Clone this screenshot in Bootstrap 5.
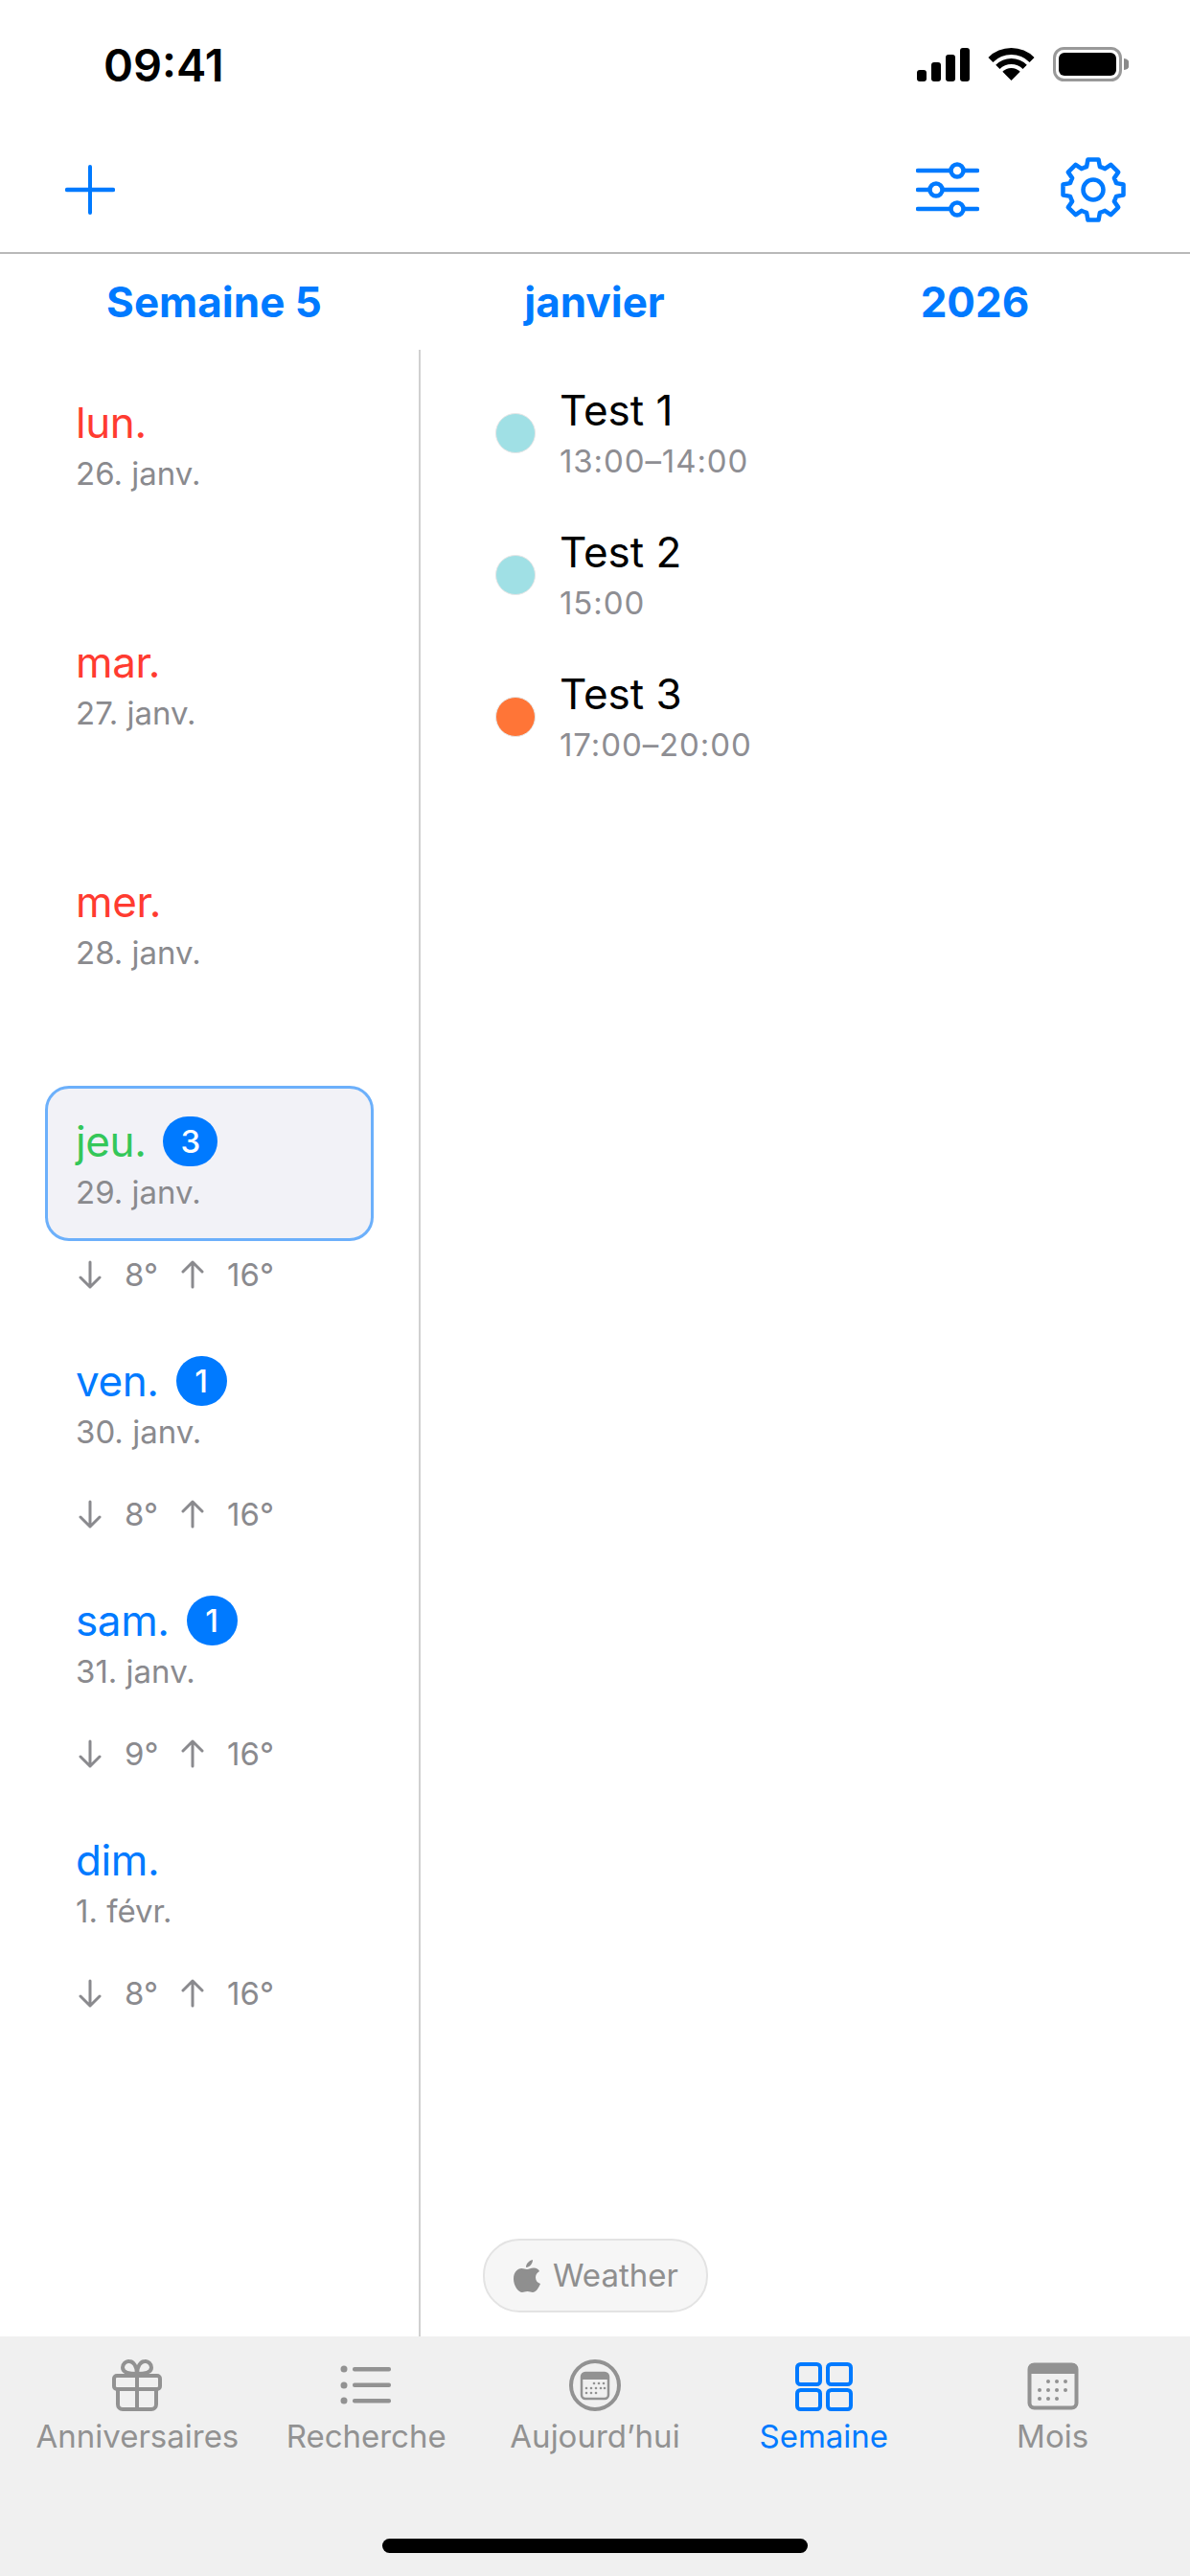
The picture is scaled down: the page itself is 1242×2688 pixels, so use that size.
<!DOCTYPE html>
<html lang="fr">
<head>
    <meta charset="UTF-8">
    <meta name="viewport" content="width=device-width, initial-scale=1.0">
    <title>Semaine</title>
    <link href="https://cdn.jsdelivr.net/npm/bootstrap@5.3.0/dist/css/bootstrap.min.css" rel="stylesheet">
    <style>
        html, body { margin: 0; width: 1242px; height: 2688px; overflow: hidden; }
        body { font-family: Inter, "Liberation Sans", sans-serif; background-color: #fff; color: #000; }
        .app-screen { width: 1242px; height: 2688px; }
        .status-line { height: 132px; padding: 0 64px 0 108px; }
        .clock { font-size: 47px; font-weight: 600; line-height: 1; margin-top: 2px; }
        .top-tools { height: 133px; padding: 0 66px 0 68px; border-bottom: 2px solid #b9b9b9; }
        .tool-right { gap: 84px; }
        .period-row { height: 100px; padding-left: 25px; color: #007aff; font-size: 44px; font-weight: 700; line-height: 1; }
        .period-cell { width: 397px; text-align: center; }
        .split-area { min-height: 0; }
        .days-col { width: 439px; border-right: 2px solid #d0d0d0; padding-top: 18px; flex: none; }
        .day-block { height: 250px; padding: 0 47px; }
        .day-box { height: 162px; padding: 29px 26px 0 29px; border: 3px solid transparent; border-radius: 25px; }
        .day-box.picked { background-color: #f2f2f7; border-color: #6cb0fb; }
        .day-name { font-size: 44px; line-height: 52px; height: 52px; gap: 18px; letter-spacing: -.4px; }
        .day-date { font-size: 33px; line-height: 40px; margin-top: 7px; color: #8a8a8e; }
        .c-red { color: #ff3b30; }
        .c-green { color: #34c759; }
        .c-blue { color: #007aff; }
        .count-pill { min-width: 53px; height: 52px; padding: 0 18px; border-radius: 26px; background-color: #007aff; color: #fff; font-size: 33px; font-weight: 500; line-height: 52px; text-align: center; letter-spacing: 0; }
        .temps-line { height: 40px; margin-top: 15px; padding-left: 35px; color: #8a8a8e; font-size: 33px; line-height: 40px; }
        .temp-val { width: 59px; margin-left: 24px; }
        .events-col { min-width: 0; padding: 13px 0 0 65px; }
        .event-line { height: 148px; gap: 25px; padding-left: 13px; }
        .event-dot { width: 42px; height: 42px; border-radius: 50%; flex: none; border: 1px solid #e6e6e6; }
        .dot-aqua { background-color: #a0e0e5; }
        .dot-orange { background-color: #ff7537; }
        .event-name { font-size: 44px; line-height: 50px; }
        .event-time { font-size: 33px; line-height: 40px; color: #8e8e93; margin-top: 8px; letter-spacing: .9px; }
        .weather-chip { width: 235px; height: 77px; margin-bottom: 25px; gap: 13px; padding-left: 30px; border: 2px solid #e3e3e3; border-radius: 38px; background-color: #f6f6f6; color: #8f8f8f; font-size: 33px; }
        .tab-strip { height: 250px; flex: none; padding: 24px 24px 0; background-color: #f0f0f0; }
        .tab-cell { width: 239px; color: #929292; font-size: 33px; line-height: 40px; }
        .tab-cell.on { color: #007aff; }
        .tab-icon { height: 54px; margin-bottom: 6px; }
        .home-pill { width: 444px; height: 15px; border-radius: 8px; background-color: #000; position: absolute; left: 399px; top: 2649px; }
    </style>
</head>
<body>
    <div class="app-screen d-flex flex-column position-relative">
        <!-- status bar -->
        <div class="status-line d-flex justify-content-between align-items-center flex-none">
            <span class="clock">09:41</span>
            <svg width="222" height="40" viewBox="0 0 222 40">
                <g fill="#000">
                    <rect x="1" y="27" width="10" height="12" rx="3"/>
                    <rect x="16" y="19" width="10" height="20" rx="3"/>
                    <rect x="31" y="11" width="10" height="28" rx="3"/>
                    <rect x="46" y="4" width="10" height="35" rx="3"/>
                    <path d="M99.5 38L90.3 28.8A13 13 0 0 1 108.7 28.8Z"/>
                    <path d="M83.24 21.74A23 23 0 0 1 115.76 21.74L111.52 25.98A17 17 0 0 0 87.48 25.98Z"/>
                    <path d="M75.46 13.96A34 34 0 0 1 123.54 13.96L118.59 18.91A27 27 0 0 0 80.41 18.91Z"/>
                    <rect x="149" y="9" width="60" height="24" rx="6"/>
                    <path d="M217 15A6 6 0 0 1 217 27Z" fill="#8a8a8a"/>
                </g>
                <rect x="144.500" y="4.500" width="69" height="33" rx="10" fill="none" stroke="#999" stroke-width="3"/>
            </svg>
        </div>

        <!-- toolbar -->
        <div class="top-tools d-flex justify-content-between align-items-center">
            <svg width="52" height="52" viewBox="0 0 52 52" stroke="#007aff" stroke-linecap="round" fill="none">
                <path d="M26 2V50" stroke-width="4"/>
                <path d="M2 26H50" stroke-width="4.500"/>
            </svg>
            <div class="tool-right d-flex align-items-center">
                <svg width="66" height="60" viewBox="0 0 66 60" fill="none" stroke="#007aff" stroke-width="4.500" stroke-linecap="round">
                    <path d="M2 10H36M50 10H64M2 30H14M28 30H64M2 50H36M50 50H64"/>
                    <circle cx="43" cy="10" r="6.500"/>
                    <circle cx="21" cy="30" r="6.500"/>
                    <circle cx="43" cy="50" r="6.500"/>
                </svg>
                <svg width="70" height="70" viewBox="0 0 70 70" fill="none" stroke="#007aff" stroke-width="4.500" stroke-linejoin="round">
                    <path d="M28.11 10.97L29.44 3.490H40.56L41.89 10.97A25 25 0 0 1 47.12 13.13L53.36 8.790L61.21 16.64L56.87 22.88A25 25 0 0 1 59.03 28.11L66.51 29.44V40.56L59.03 41.89A25 25 0 0 1 56.87 47.12L61.21 53.36L53.36 61.21L47.12 56.87A25 25 0 0 1 41.89 59.03L40.56 66.51H29.44L28.11 59.03A25 25 0 0 1 22.88 56.87L16.64 61.21L8.790 53.36L13.13 47.12A25 25 0 0 1 10.97 41.89L3.490 40.56V29.44L10.97 28.11A25 25 0 0 1 13.13 22.88L8.790 16.64L16.64 8.790L22.88 13.13A25 25 0 0 1 28.11 10.97Z"/>
                    <circle cx="35" cy="35" r="10.500"/>
                </svg>
            </div>
        </div>

        <!-- week, month, year -->
        <div class="period-row d-flex align-items-center">
            <div class="period-cell">Semaine 5</div>
            <div class="period-cell">janvier</div>
            <div class="period-cell">2026</div>
        </div>

        <div class="split-area d-flex flex-grow-1">
            <div class="days-col">
                <div class="day-block">
                    <div class="day-box">
                        <div class="day-name c-red d-flex align-items-center">lun.</div>
                        <div class="day-date">26. janv.</div>
                    </div>
                </div>
                <div class="day-block">
                    <div class="day-box">
                        <div class="day-name c-red d-flex align-items-center">mar.</div>
                        <div class="day-date">27. janv.</div>
                    </div>
                </div>
                <div class="day-block">
                    <div class="day-box">
                        <div class="day-name c-red d-flex align-items-center">mer.</div>
                        <div class="day-date">28. janv.</div>
                    </div>
                </div>
                <div class="day-block">
                    <div class="day-box picked">
                        <div class="day-name c-green d-flex align-items-center">jeu. <span class="count-pill">3</span></div>
                        <div class="day-date">29. janv.</div>
                    </div>
                    <div class="temps-line d-flex align-items-center">
                        <svg width="24" height="30" viewBox="0 0 24 30" fill="none" stroke="#8a8a8e" stroke-width="3" stroke-linecap="round" stroke-linejoin="round"><path d="M12 2V28M2 18L12 28L22 18"/></svg>
                        <span class="temp-val">8°</span>
                        <svg width="24" height="30" viewBox="0 0 24 30" fill="none" stroke="#8a8a8e" stroke-width="3" stroke-linecap="round" stroke-linejoin="round"><path d="M12 28V2M2 12L12 2L22 12"/></svg>
                        <span class="temp-val">16°</span>
                    </div>
                </div>
                <div class="day-block">
                    <div class="day-box">
                        <div class="day-name c-blue d-flex align-items-center">ven. <span class="count-pill">1</span></div>
                        <div class="day-date">30. janv.</div>
                    </div>
                    <div class="temps-line d-flex align-items-center">
                        <svg width="24" height="30" viewBox="0 0 24 30" fill="none" stroke="#8a8a8e" stroke-width="3" stroke-linecap="round" stroke-linejoin="round"><path d="M12 2V28M2 18L12 28L22 18"/></svg>
                        <span class="temp-val">8°</span>
                        <svg width="24" height="30" viewBox="0 0 24 30" fill="none" stroke="#8a8a8e" stroke-width="3" stroke-linecap="round" stroke-linejoin="round"><path d="M12 28V2M2 12L12 2L22 12"/></svg>
                        <span class="temp-val">16°</span>
                    </div>
                </div>
                <div class="day-block">
                    <div class="day-box">
                        <div class="day-name c-blue d-flex align-items-center">sam. <span class="count-pill">1</span></div>
                        <div class="day-date">31. janv.</div>
                    </div>
                    <div class="temps-line d-flex align-items-center">
                        <svg width="24" height="30" viewBox="0 0 24 30" fill="none" stroke="#8a8a8e" stroke-width="3" stroke-linecap="round" stroke-linejoin="round"><path d="M12 2V28M2 18L12 28L22 18"/></svg>
                        <span class="temp-val">9°</span>
                        <svg width="24" height="30" viewBox="0 0 24 30" fill="none" stroke="#8a8a8e" stroke-width="3" stroke-linecap="round" stroke-linejoin="round"><path d="M12 28V2M2 12L12 2L22 12"/></svg>
                        <span class="temp-val">16°</span>
                    </div>
                </div>
                <div class="day-block">
                    <div class="day-box">
                        <div class="day-name c-blue d-flex align-items-center">dim.</div>
                        <div class="day-date">1. févr.</div>
                    </div>
                    <div class="temps-line d-flex align-items-center">
                        <svg width="24" height="30" viewBox="0 0 24 30" fill="none" stroke="#8a8a8e" stroke-width="3" stroke-linecap="round" stroke-linejoin="round"><path d="M12 2V28M2 18L12 28L22 18"/></svg>
                        <span class="temp-val">8°</span>
                        <svg width="24" height="30" viewBox="0 0 24 30" fill="none" stroke="#8a8a8e" stroke-width="3" stroke-linecap="round" stroke-linejoin="round"><path d="M12 28V2M2 12L12 2L22 12"/></svg>
                        <span class="temp-val">16°</span>
                    </div>
                </div>
            </div>

            <div class="events-col d-flex flex-column flex-grow-1">
                <div class="event-line d-flex align-items-center">
                    <span class="event-dot dot-aqua"></span>
                    <div>
                        <div class="event-name">Test 1</div>
                        <div class="event-time">13:00–14:00</div>
                    </div>
                </div>
                <div class="event-line d-flex align-items-center">
                    <span class="event-dot dot-aqua"></span>
                    <div>
                        <div class="event-name">Test 2</div>
                        <div class="event-time">15:00</div>
                    </div>
                </div>
                <div class="event-line d-flex align-items-center">
                    <span class="event-dot dot-orange"></span>
                    <div>
                        <div class="event-name">Test 3</div>
                        <div class="event-time">17:00–20:00</div>
                    </div>
                </div>
                <div class="weather-chip d-flex align-items-center mt-auto">
                    <svg width="28" height="34" viewBox="0 0 28 34" fill="#8f8f8f"><path d="M20 0C20 4 17 8 13 8C13 4 16 1 20 0ZM14 10C16 10 18 8.500 21 8.500C24 8.500 26 10 27 12C24 14 23 16 23 18.500C23 22 25 24 28 25C26 30 23 34 20 34C18 34 17 33 14.500 33C12 33 11 34 9 34C5 34 0 27 0 20C0 13 4 9 8.500 9C10.500 9 12 10 14 10Z"/></svg>
                    <span>Weather</span>
                </div>
            </div>
        </div>

        <!-- tab bar -->
        <div class="tab-strip d-flex">
            <div class="tab-cell d-flex flex-column align-items-center">
                <div class="tab-icon">
                    <svg width="52" height="54" viewBox="0 0 52 54" fill="none" stroke="#929292" stroke-width="4" stroke-linejoin="round">
                        <rect x="2" y="17" width="48" height="14" rx="3"/>
                        <path d="M6 31V47A5 5 0 0 0 11 52H41A5 5 0 0 0 46 47V31M26 15V52"/>
                        <path d="M26 15C22 15 11 15 11 8.500A6.500 6.500 0 0 1 18 2C22 2 26 7 26 15C26 7 30 2 34 2A6.500 6.500 0 0 1 41 8.500C41 15 30 15 26 15Z"/>
                    </svg>
                </div>
                <span>Anniversaires</span>
            </div>
            <div class="tab-cell d-flex flex-column align-items-center">
                <div class="tab-icon">
                    <svg width="54" height="54" viewBox="0 0 54 54" fill="#929292">
                        <circle cx="4" cy="10" r="3.500"/>
                        <circle cx="4" cy="27" r="3.500"/>
                        <circle cx="4" cy="43" r="3.500"/>
                        <rect x="13" y="8" width="40" height="4.500" rx="2"/>
                        <rect x="13" y="24.500" width="40" height="4.500" rx="2"/>
                        <rect x="13" y="41" width="40" height="4.500" rx="2"/>
                    </svg>
                </div>
                <span>Recherche</span>
            </div>
            <div class="tab-cell d-flex flex-column align-items-center">
                <div class="tab-icon">
                    <svg width="54" height="54" viewBox="0 0 54 54">
                        <circle cx="27" cy="27" r="25" fill="none" stroke="#929292" stroke-width="4"/>
                        <rect x="13" y="14" width="28" height="27" rx="4" fill="none" stroke="#929292" stroke-width="2.500"/>
                        <path d="M13 18A4 4 0 0 1 17 14H37A4 4 0 0 1 41 18V21H13Z" fill="#929292"/>
                        <g fill="#929292">
                            <circle cx="26" cy="25" r="1.300"/><circle cx="31" cy="25" r="1.300"/><circle cx="36" cy="25" r="1.300"/>
                            <circle cx="18" cy="30" r="1.300"/><circle cx="23" cy="30" r="1.300"/><circle cx="28" cy="30" r="1.300"/><circle cx="33" cy="30" r="1.300"/><circle cx="37" cy="30" r="1.300"/>
                            <circle cx="18" cy="35" r="1.300"/><circle cx="23" cy="35" r="1.300"/><circle cx="28" cy="35" r="1.300"/>
                        </g>
                    </svg>
                </div>
                <span>Aujourd’hui</span>
            </div>
            <div class="tab-cell on d-flex flex-column align-items-center">
                <div class="tab-icon">
                    <svg width="60" height="54" viewBox="0 0 60 54" fill="none" stroke="#007aff" stroke-width="4">
                        <rect x="2" y="5" width="24" height="21" rx="3.500"/>
                        <rect x="34" y="5" width="24" height="21" rx="3.500"/>
                        <rect x="2" y="32" width="24" height="20" rx="3.500"/>
                        <rect x="34" y="32" width="24" height="20" rx="3.500"/>
                    </svg>
                </div>
                <span>Semaine</span>
            </div>
            <div class="tab-cell d-flex flex-column align-items-center">
                <div class="tab-icon">
                    <svg width="54" height="54" viewBox="0 0 54 54">
                        <rect x="2.500" y="5.500" width="49" height="45" rx="5" fill="none" stroke="#929292" stroke-width="4"/>
                        <path d="M1 9A6 6 0 0 1 7 4H47A6 6 0 0 1 53 9V15H1Z" fill="#929292"/>
                        <g fill="#929292">
                            <circle cx="22" cy="23" r="2"/><circle cx="31" cy="23" r="2"/><circle cx="40" cy="23" r="2"/>
                            <circle cx="13" cy="32" r="2"/><circle cx="22" cy="32" r="2"/><circle cx="31" cy="32" r="2"/><circle cx="40" cy="32" r="2"/>
                            <circle cx="13" cy="41" r="2"/><circle cx="22" cy="41" r="2"/><circle cx="31" cy="41" r="2"/>
                        </g>
                    </svg>
                </div>
                <span>Mois</span>
            </div>
        </div>
        <div class="home-pill"></div>
    </div>
    <script src="https://cdn.jsdelivr.net/npm/bootstrap@5.3.0/dist/js/bootstrap.bundle.min.js"></script>
</body>
</html>
